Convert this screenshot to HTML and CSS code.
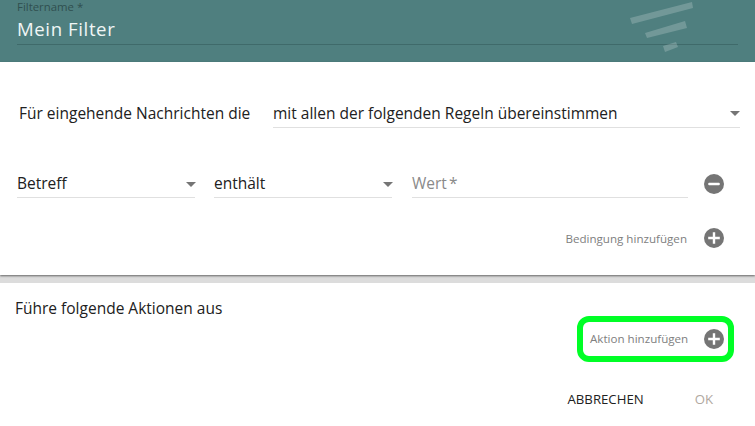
FILE: index.html
```
<!DOCTYPE html>
<html lang="de">
<head>
<meta charset="utf-8">
<title>Filter</title>
<link rel="stylesheet" href="styles.css">
</head>
<body>
<header class="head">
  <div class="name-field">
    <div class="name-label">Filtername *</div>
    <div class="name-value">Mein Filter</div>
  </div>
  <svg class="head-icon" width="104" height="56" viewBox="0 0 104 56"><g fill="#fff" fill-opacity=".2"><polygon points="30,18 92,2 93,8 32,24"/><polygon points="45,33 85,21 87,28 47,38"/><polygon points="63,46 76,42 78,47 65,52"/></g></svg>
</header>
<section class="rules">
  <div class="match-row">
    <span class="match-label">Für eingehende Nachrichten die</span>
    <div class="select match-select"><span>mit allen der folgenden Regeln übereinstimmen</span><i class="caret"></i></div>
  </div>
  <div class="cond-row">
    <div class="select subject"><span>Betreff</span><i class="caret"></i></div>
    <div class="select op"><span>enthält</span><i class="caret"></i></div>
    <div class="select value"><span class="placeholder">Wert *</span></div>
    <svg class="round" width="20" height="20" viewBox="0 0 20 20"><circle cx="10" cy="10" r="10" fill="#757575"/><rect x="4.2" y="8.8" width="11.6" height="2.4" rx="1" fill="#fff"/></svg>
  </div>
  <div class="add-row">
    <span class="add-text">Bedingung hinzufügen</span>
    <svg class="round" width="20" height="20" viewBox="0 0 20 20"><circle cx="10" cy="10" r="10" fill="#757575"/><path d="M4.2 10h11.6M10 4.2v11.6" stroke="#fff" stroke-width="2.4"/></svg>
  </div>
</section>
<section class="actions">
  <h2 class="actions-title">Führe folgende Aktionen aus</h2>
  <div class="add-action-wrap">
    <div class="add-action">
      <span class="add-text action-text">Aktion hinzufügen</span>
      <svg class="round" width="20" height="20" viewBox="0 0 20 20"><circle cx="10" cy="10" r="10" fill="#757575"/><path d="M4.2 10h11.6M10 4.2v11.6" stroke="#fff" stroke-width="2.4"/></svg>
    </div>
  </div>
  <div class="buttons">
    <span class="btn">ABBRECHEN</span>
    <span class="btn disabled">OK</span>
  </div>
</section>
</body>
</html>
```
FILE: styles.css
```
html, body { margin: 0; padding: 0; }
body {
  width: 755px;
  height: 426px;
  overflow: hidden;
  background: #fff;
  font-family: "Open Sans", "Noto Sans", sans-serif;
  color: #212121;
  font-size: 15.5px;
}
.head {
  position: relative;
  height: 62px;
  background: #4f7f7f;
  padding: 0 17px;
  box-sizing: border-box;
}
.name-field { width: 721px; height: 45px; border-bottom: 1px solid #3f6a6a; box-sizing: border-box; }
.name-label { font-size: 11.4px; line-height: 14px; color: #2f4f4f; }
.name-value { font-size: 18.6px; line-height: 26px; color: #f0f6f6; margin-top: 2px; letter-spacing: .6px; }
.head-icon { position: absolute; left: 600px; top: 0; }
.rules {
  position: relative;
  z-index: 1;
  height: 213px;
  box-sizing: border-box;
  padding: 38px 0 0 17px;
  background: #fff;
  box-shadow: 0 1px 2px rgba(0,0,0,.55);
}
.match-row { display: flex; align-items: flex-start; padding-left: 2px; height: 28px; }
.match-label { width: 254px; line-height: 26px; }
.select { display: flex; align-items: center; justify-content: space-between; border-bottom: 1px solid #e0e0e0; box-sizing: border-box; }
.select span { line-height: 26px; }
.match-select { width: 467px; height: 28px; padding-bottom: 2px; }
.cond-row { display: flex; align-items: center; margin-top: 42px; height: 28px; }
.subject { width: 178px; height: 28px; margin-right: 19px; padding-bottom: 1px; }
.op { width: 178px; height: 28px; margin-right: 20px; padding-bottom: 1px; }
.value { width: 276px; height: 28px; margin-right: 16px; padding-bottom: 1px; }
.placeholder { color: #8a8a8a; word-spacing: -2px; }
.caret { width: 0; height: 0; border-left: 5px solid transparent; border-right: 5px solid transparent; border-top: 5px solid #757575; margin-top: 2px; }
.subject .caret, .op .caret { margin-right: -1px; }
.round { flex: none; display: block; }
.add-row { display: flex; align-items: center; justify-content: flex-end; gap: 17px; margin-top: 26px; padding-right: 31px; height: 28px; }
.add-text { font-size: 11.6px; color: #808080; }
.action-text { padding-bottom: 2px; }
.actions {
  border-top: 8px solid #dcdcdc;
  padding-left: 15px;
}
.actions-title { margin: 0; font-size: 15.5px; font-weight: 400; line-height: 22px; padding-top: 14px; }
.add-action-wrap { display: flex; justify-content: flex-end; padding-right: 21px; margin-top: -3px; }
.add-action {
  display: flex; align-items: center; gap: 16px;
  width: 157px; height: 46px; box-sizing: border-box;
  border: 6px solid #00ff26; border-radius: 12px;
  padding-left: 7px;
}
.buttons { display: flex; justify-content: flex-end; align-items: center; margin-top: 25px; padding-right: 42px; gap: 51px; }
.btn { font-size: 13.2px; font-weight: 500; color: #212121; line-height: 24px; }
.btn.disabled { color: #b0a8a0; }
```
